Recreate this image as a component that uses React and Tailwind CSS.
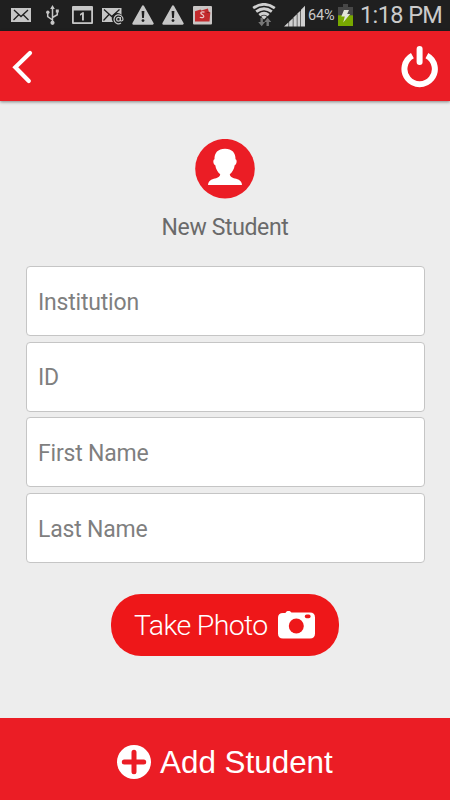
import React from 'react';

function WarningIcon({ className }) {
  return (
    <svg className={className} width="22" height="20" viewBox="0 0 22 20">
      <path d="M11 1.5 20.5 18.5H1.5Z" fill="#c6c6c6" stroke="#c6c6c6" strokeWidth="2.4" strokeLinejoin="round" />
      <path d="M9.6 6h2.8l-.5 7h-1.8Z" fill="#1f1f1f" />
      <circle cx="11" cy="15.6" r="1.4" fill="#1f1f1f" />
    </svg>
  );
}

function StatusBar() {
  return (
    <div className="flex h-[31px] shrink-0 items-start bg-[#1f1f1f] font-[Roboto,sans-serif] text-[#cbcbcb]">
      <svg className="mt-2 ml-[11px]" width="20" height="14" viewBox="0 0 20 14">
        <rect width="20" height="14" fill="#c6c6c6" />
        <path d="M3 2 10 8.5 17 2M2.5 12 7.5 7M17.5 12 12.5 7" fill="none" stroke="#1f1f1f" strokeWidth="1.3" />
      </svg>
      <svg className="mt-[5px] ml-[15px]" width="13" height="20" viewBox="0 0 13 20">
        <path d="M6.5 2v15M6.5 15 1.7 11.7V8M6.5 12.5l4.8-2.8V6" fill="none" stroke="#c6c6c6" strokeWidth="1.5" />
        <path d="M6.5 0 8.8 4H4.2ZM9.8 4.5h3v3h-3Z" fill="#c6c6c6" />
        <circle cx="1.8" cy="7.3" r="1.7" fill="#c6c6c6" />
        <circle cx="6.5" cy="17.8" r="2.1" fill="#c6c6c6" />
      </svg>
      <svg className="mt-1.5 ml-[13px]" width="21" height="18" viewBox="0 0 21 18">
        <rect width="21" height="18" rx="1" fill="#c6c6c6" />
        <path d="M1.8 4.5h17.4v11.7H1.8Z" fill="#1f1f1f" />
        <path d="m8 8.1 2.4-1.9h1.5v8.2H10V8.5L8 9.7Z" fill="#c6c6c6" />
      </svg>
      <svg className="mt-2 ml-[9px]" width="22" height="17" viewBox="0 0 22 17">
        <path d="M0 0h19.5v7A5 5 0 0 0 11 14H0Z" fill="#c6c6c6" />
        <path d="M2 1.5 9.8 8.5 17.5 1.5M1.5 12.5l5.5-6M17.5 9 12.5 5.5" fill="none" stroke="#1f1f1f" strokeWidth="1.3" />
        <circle cx="16.5" cy="11.3" r="5.3" fill="#1f1f1f" />
        <circle cx="16.5" cy="11.3" r="1.9" fill="none" stroke="#c6c6c6" strokeWidth="1.2" />
        <path d="M18.4 9v3c0 1.4 2.6 1.5 2.6-.7a4.5 4.5 0 1 0-2 3.8" fill="none" stroke="#c6c6c6" strokeWidth="1.2" />
      </svg>
      <WarningIcon className="mt-[5px] ml-2" />
      <WarningIcon className="mt-[5px] ml-2" />
      <svg className="mt-1.5 ml-[9px]" width="19" height="19" viewBox="0 0 19 19">
        <rect width="19" height="18.6" rx="1" fill="#c9c5c4" />
        <path d="m2 5.2 5.5-1.8.8 1.2 6.6-2 .8 3 1.6 1-.8 8.9H2Z" fill="#c32a2d" />
        <path d="M11.5 6.2C8 5.3 6.8 7 8.8 8.3l1.5 1c1.4 1.4-.3 3.2-3.5 2" fill="none" stroke="#ebcaca" strokeWidth="1.2" />
        <path d="M13.7 6.5h2.6" stroke="#7f2022" strokeWidth=".8" />
      </svg>
      <svg className="mt-[3px] ml-[40px]" width="24" height="24" viewBox="0 0 24 24">
        <g fill="none" stroke="#cfcfcf" strokeWidth="2.8">
          <path d="M1.2 5.1Q12-2.4 22.8 5.1" />
          <path d="M4.2 8.7Q12 2.8 19.8 8.7" />
          <path d="M7.3 12.2Q12 8.4 16.7 12.2" />
        </g>
        <path d="M9.2 13.7Q12 11.4 14.8 13.7L12 16.5Z" fill="#cfcfcf" />
        <path d="M8.5 15h2.4v4h2.2L9.7 23.2 6.2 19h2.3ZM14.5 23h2.4v-4h2.3l-3.5-4.2-3.4 4.2h2.2Z" fill="#777" />
      </svg>
      <svg className="mt-[5px] ml-2" width="21" height="22" viewBox="0 0 21 22">
        <path d="M0 21.5 4.5 17.3v4.2ZM5.1 16.7l3.7-3.4v8.2H5.1ZM9.4 12.5l3.4-3.2v12.2H9.4ZM13.4 8.5l3-2.8v15.8h-3ZM17 4.7 21 .7v20.8h-4Z" fill="#cfcfcf" />
      </svg>
      <span className="mt-[7px] ml-[3px] w-[29px] text-[14.5px] leading-[18px] tracking-[-0.1px] whitespace-nowrap">64%</span>
      <svg className="mt-1 ml-px" width="15" height="22" viewBox="0 0 15 22">
        <path d="M5 0h5v3h5v19H0V3h5Z" fill="#474747" />
        <path d="M0 11.3h15V22H0Z" fill="#78a800" />
        <path d="M6 6h5L9.2 10h3L5.2 18.5 6.8 12.6H3.3Z" fill="#e2e5d8" />
      </svg>
      <span className="mt-px ml-[7px] text-[23.5px] leading-[28px] tracking-[-0.6px] whitespace-nowrap">1:18 PM</span>
    </div>
  );
}

function Header() {
  return (
    <header className="flex h-[70px] shrink-0 justify-between bg-[#eb1d25] shadow-[0_1px_3px_rgba(0,0,0,0.45)]">
      <button aria-label="Back" className="mt-[19px] ml-3 h-[36px] w-[22px]">
        <svg width="22" height="36" viewBox="0 0 22 36">
          <path d="M18 3 3.3 17.3 16.8 31" fill="none" stroke="#fff" strokeWidth="4.2" strokeLinecap="round" />
        </svg>
      </button>
      <button aria-label="Log out" className="mt-[14px] mr-3 h-[43px] w-[37px]">
        <svg width="37" height="43" viewBox="0 0 37 43">
          <path d="M11.4 10.6A15.2 15.2 0 1 0 25.9 10.6" fill="none" stroke="#fff" strokeWidth="6" />
          <path d="M18.6 4v13" stroke="#fff" strokeWidth="6" strokeLinecap="round" />
        </svg>
      </button>
    </header>
  );
}

const FIELDS = ['Institution', 'ID', 'First Name', 'Last Name'];

export default function App() {
  return (
    <div className="flex h-[800px] w-[450px] flex-col overflow-hidden bg-[#ededed] font-[Roboto,sans-serif]">
      <StatusBar />
      <Header />
      <main className="flex grow flex-col items-center">
        <svg className="mt-[38px] shrink-0" width="60" height="60" viewBox="0 0 60 60">
          <circle cx="30" cy="29.7" r="29.8" fill="#eb1d25" />
          <path d="M30 9.7C23 9.7 19.200 13.800 19.500 20.300 17.700 20.500 18 25.600 20.300 26.200 20.900 30 22.500 33 25.200 35.200 25 38 22 38.900 18.800 39.800 14.800 41 13 43 13 46H47C47 43 45.200 41 41.200 39.800 38 38.900 35 38 34.800 35.200 37.500 33 39.100 30 39.700 26.200 42 25.600 42.300 20.500 40.500 20.300 40.800 13.800 37 9.700 30 9.700Z" fill="#fff" />
        </svg>
        <h1 className="mt-[14px] text-[23px] leading-[30px] tracking-[-0.35px] text-[#6a6a6a]">New Student</h1>
        <div className="mt-[23px] ml-px flex w-[399px] flex-col gap-[5.7px]">
          {FIELDS.map((name) => (
            <input
              key={name}
              aria-label={name}
              placeholder={name}
              className="h-[70px] w-full rounded-[4px] border border-[#c5c5c5] bg-white px-[11px] pt-0.5 text-[23px] tracking-[-0.2px] outline-none placeholder:text-[#7f7f7f] placeholder:opacity-100"
            />
          ))}
        </div>
        <button className="mt-[31px] flex h-[62px] w-[228px] items-center rounded-[30px] bg-[#ee1719] pl-[23px] text-white">
          <span className="w-[134px] pt-0.5 text-left text-[28.5px] leading-none font-light tracking-[-0.65px] whitespace-nowrap">Take Photo</span>
          <svg className="ml-[10px]" width="37" height="28" viewBox="0 0 37 28">
            <path d="M5 2h2.5C8 .5 9 0 10.5 0S13 .6 13.4 1.6H32c3.3 0 5 1.7 5 5V22.5c0 3.3-1.7 5-5 5H5c-3.3 0-5-1.7-5-5V6.8C0 3.7 1.7 2 5 2Z" fill="#fff" />
            <circle cx="18.3" cy="15" r="7.5" fill="#ee1719" />
            <rect x="26.8" y="3.5" width="5.8" height="3.7" rx="1.8" fill="#ee1719" />
          </svg>
        </button>
      </main>
      <button className="flex h-[82px] shrink-0 items-center bg-[#eb1d25] pt-[5px] pl-[117px] text-white">
        <svg width="34" height="34" viewBox="0 0 34 34">
          <circle cx="17" cy="17" r="17" fill="#fff" />
          <path d="M17 7.3v19.4M7.3 17h19.4" stroke="#eb1d25" strokeWidth="5" strokeLinecap="round" />
        </svg>
        <span className="ml-[9px] pt-0.5 font-['Liberation_Sans',sans-serif] text-[31.4px] leading-none whitespace-nowrap">Add Student</span>
      </button>
    </div>
  );
}
